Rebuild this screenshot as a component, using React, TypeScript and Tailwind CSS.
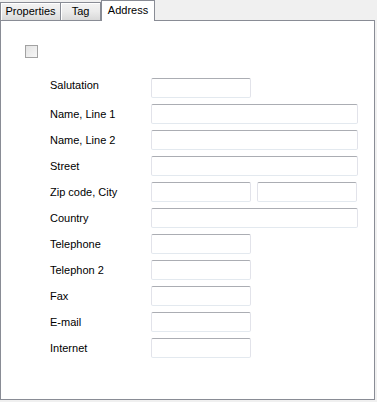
import React from 'react';

const font = { fontFamily: '"Liberation Sans", Arial, sans-serif' };

const TextBox: React.FC<{ wide?: boolean }> = ({ wide }) => (
    <div
        className={`${wide ? 'w-[207px]' : 'w-[100px]'} h-[20px] bg-white rounded-[2px] border border-[#e2e3ea] border-t-[#abadb3] border-b-[#e3e9ef]`}
    />
);

const rows: { label: string; kind: 'short' | 'wide' | 'pair'; nudge?: boolean }[] = [
    { label: 'Salutation', kind: 'short', nudge: true },
    { label: 'Name, Line 1', kind: 'wide' },
    { label: 'Name, Line 2', kind: 'wide' },
    { label: 'Street', kind: 'wide' },
    { label: 'Zip code, City', kind: 'pair' },
    { label: 'Country', kind: 'wide' },
    { label: 'Telephone', kind: 'short' },
    { label: 'Telephon 2', kind: 'short' },
    { label: 'Fax', kind: 'short' },
    { label: 'E-mail', kind: 'short' },
    { label: 'Internet', kind: 'short' },
];

const App: React.FC = () => {
    return (
        <div className="w-[377px] h-[402px] bg-[#f0f0f0] flex flex-col text-[11px] text-black" style={font}>
            {/* tab strip */}
            <div className="h-[20px] flex items-end">
                <div className="w-[61px] h-[18px] flex items-center justify-center border border-b-0 border-[#898c95] bg-gradient-to-b from-[#f3f3f3] via-[#ebebeb] to-[#d9d9d9] shadow-[inset_1px_1px_0_#fff]">
                    Properties
                </div>
                <div className="w-[40px] h-[18px] flex items-center justify-center border border-b-0 border-l-0 border-[#898c95] bg-gradient-to-b from-[#f3f3f3] via-[#ebebeb] to-[#d9d9d9] shadow-[inset_1px_1px_0_#fff]">
                    Tag
                </div>
                <div className="relative z-10 w-[54px] h-[21px] -mb-px pb-[2px] flex items-center justify-center border border-b-0 border-[#898c95] bg-white">
                    Address
                </div>
            </div>

            {/* panel */}
            <div className="w-[375px] h-[380px] border border-[#898c95] bg-white flex flex-col">
                <div className="ml-[24px] mt-[24px] w-[13px] h-[13px] border border-[#a2a2a2] bg-gradient-to-br from-[#e3e3e3] to-[#f7f7f7]" />

                <div className="mt-[20px] pl-[49px] flex flex-col gap-[6px]">
                    {rows.map((row) => (
                        <div key={row.label} className="flex items-center h-[20px]">
                            <span className={`w-[101px] ${row.nudge ? 'mb-[6px]' : 'mt-px'}`}>{row.label}</span>
                            {row.kind === 'short' && <TextBox />}
                            {row.kind === 'wide' && <TextBox wide />}
                            {row.kind === 'pair' && (
                                <div className="flex gap-[6px]">
                                    <TextBox />
                                    <TextBox />
                                </div>
                            )}
                        </div>
                    ))}
                </div>
            </div>
        </div>
    );
};

export default App;
